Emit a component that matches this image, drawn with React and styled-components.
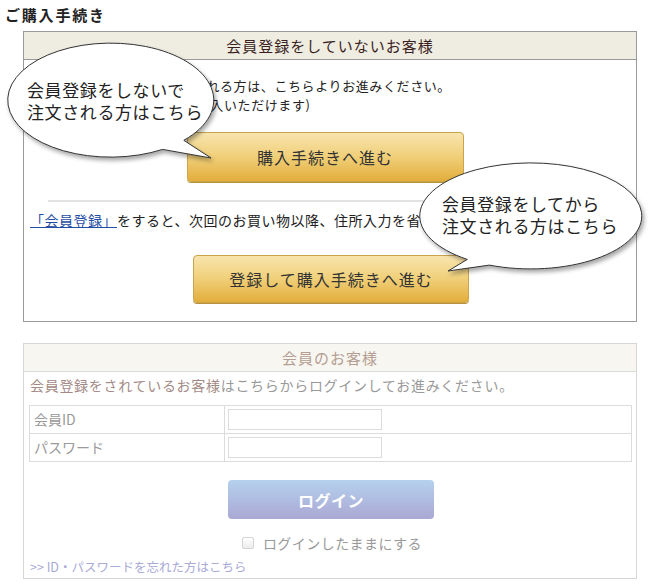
import React from "react";
import styled, { createGlobalStyle } from "styled-components";

const GlobalStyle = createGlobalStyle`
  body {
    margin: 0;
    background: #fff;
    font-family: "Noto Sans CJK JP", "Liberation Sans", sans-serif;
    color: #222;
  }
`;

const App = () => {
  return (
    <Page>
      <GlobalStyle />
      <Title>ご購入手続き</Title>

      <Box $border="#9a9a9a">
        <BoxHeader $bg="#efece1" $color="#3a1e1e" $line="#9a9a9a">
          会員登録をしていないお客様
        </BoxHeader>
        <Intro>
          会員登録をしないでご購入される方は、こちらよりお進みください。
          <br />
          (会員登録をしなくても、ご購入いただけます)
        </Intro>
        <GoldButton $top={18} $w={277} $h={50} $shift={-5}>
          購入手続きへ進む
        </GoldButton>
        <Divider />
        <Note>
          <BlueLink href="#">「会員登録」</BlueLink>をすると、次回のお買い物以降、住所入力を省略できます。
        </Note>
        <GoldButton $top={25} $w={276} $h={48} $shift={1}>
          登録して購入手続きへ進む
        </GoldButton>
      </Box>

      <Box $border="#d6d6d6" $top={21}>
        <BoxHeader $bg="#f8f6f1" $color="#b49e92" $line="#dcdcdc">
          会員のお客様
        </BoxHeader>
        <Lead>
          <strong>会員登録をされているお客様</strong>はこちらからログインしてお進みください。
        </Lead>
        <FieldTable>
          <FieldRow>
            <FieldLabel>会員ID</FieldLabel>
            <FieldCell>
              <TextInput type="text" />
            </FieldCell>
          </FieldRow>
          <FieldRow>
            <FieldLabel>パスワード</FieldLabel>
            <FieldCell>
              <TextInput type="password" />
            </FieldCell>
          </FieldRow>
        </FieldTable>
        <LoginButton>ログイン</LoginButton>
        <KeepLine>
          <Check type="checkbox" />
          <span>ログインしたままにする</span>
        </KeepLine>
        <Forgot href="#">&gt;&gt; ID・パスワードを忘れた方はこちら</Forgot>
      </Box>

      <BubbleLayer width="648" height="330" viewBox="0 0 648 330">
        <defs>
          <filter id="bubbleShadow" x="-10%" y="-10%" width="130%" height="140%">
            <feDropShadow dx="2" dy="3" stdDeviation="2" floodColor="#000" floodOpacity="0.35" />
          </filter>
        </defs>
        <g filter="url(#bubbleShadow)" fill="#fff" stroke="#333" strokeWidth="1">
          <path d="M 183.8 140.3 A 103 57 0 1 0 162.5 149.4 L 211 158 Z" />
          <path d="M 489.4 265.1 A 111 53 0 1 0 467.3 259.4 L 448 271 Z" />
        </g>
      </BubbleLayer>
      <BubbleText $x={27} $y={79}>
        会員登録をしないで
        <br />
        注文される方はこちら
      </BubbleText>
      <BubbleText $x={442} $y={193}>
        会員登録をしてから
        <br />
        注文される方はこちら
      </BubbleText>
    </Page>
  );
};

export default App;

const Page = styled.div`
  position: relative;
  width: 648px;
  padding-top: 6px;
  padding-bottom: 8px;
`;

const Title = styled.h1`
  margin: 0 0 7px 5px;
  font-size: 15px;
  font-weight: bold;
  line-height: 18px;
  letter-spacing: 1.8px;
  color: #222;
`;

const Box = styled.div`
  box-sizing: border-box;
  width: 614px;
  margin: ${(p) => p.$top || 0}px 0 0 23px;
  border: 1px solid ${(p) => p.$border};
  padding-bottom: ${(p) => (p.$top ? 1 : 18)}px;
`;

const BoxHeader = styled.div`
  height: 27px;
  line-height: 27px;
  border-bottom: 1px solid ${(p) => p.$line};
  background: ${(p) => p.$bg};
  color: ${(p) => p.$color};
  text-align: center;
  font-size: 15px;
  letter-spacing: 1px;
`;

const Intro = styled.p`
  margin: 16px 6px 0;
  font-size: 13px;
  line-height: 19px;
  letter-spacing: 0.6px;
  color: #222;
`;

const GoldButton = styled.button`
  display: block;
  box-sizing: border-box;
  width: ${(p) => p.$w}px;
  height: ${(p) => p.$h}px;
  margin: ${(p) => p.$top}px auto 0;
  position: relative;
  left: ${(p) => p.$shift}px;
  border: 1px solid #c9a44c;
  border-radius: 4px;
  background: linear-gradient(#f8e4ae 0%, #f0cf78 50%, #e2ad3c 100%);
  box-shadow: 0 1px 0 #b8913a;
  font-family: inherit;
  font-size: 16px;
  letter-spacing: 1px;
  color: #333;
  cursor: pointer;
`;

const Divider = styled.hr`
  margin: 18px 24px 0;
  height: 2px;
  border: none;
  background: #e2e2e2;
`;

const Note = styled.p`
  margin: 8px 6px 0;
  font-size: 14px;
  line-height: 20px;
  letter-spacing: 0.5px;
  color: #222;
`;

const BlueLink = styled.a`
  color: #1f4ea3;
  text-decoration: underline;
`;

const Lead = styled.p`
  margin: 3px 6px 0;
  font-size: 14px;
  line-height: 20px;
  letter-spacing: 0.7px;
  color: #999;

  strong {
    font-weight: normal;
    color: #a48a86;
  }
`;

const FieldTable = styled.div`
  margin: 10px 4px 0 5px;
  border: 1px solid #dcdcdc;
`;

const FieldRow = styled.div`
  display: grid;
  grid-template-columns: 195px 1fr;
  height: 27px;

  & + & {
    border-top: 1px solid #dcdcdc;
  }
`;

const FieldLabel = styled.div`
  border-right: 1px solid #dcdcdc;
  padding-left: 4px;
  font-size: 14px;
  line-height: 27px;
  color: #9a9a9a;
`;

const FieldCell = styled.div`
  display: flex;
  align-items: center;
  padding-left: 3px;
`;

const TextInput = styled.input`
  box-sizing: border-box;
  width: 154px;
  height: 21px;
  margin: 0;
  border: 1px solid #dcdcdc;
  background: #fff;
`;

const LoginButton = styled.button`
  display: block;
  box-sizing: border-box;
  width: 206px;
  height: 39px;
  margin: 18px auto 0;
  position: relative;
  left: 1px;
  border: none;
  border-radius: 4px;
  background: linear-gradient(#b5d1ee, #aaa8d4);
  font-family: inherit;
  font-size: 16px;
  font-weight: bold;
  letter-spacing: 0.5px;
  color: #fff;
  cursor: pointer;
`;

const KeepLine = styled.label`
  display: flex;
  justify-content: center;
  align-items: center;
  gap: 9px;
  margin-top: 14px;
  padding-left: 4px;
  font-size: 14px;
  line-height: 20px;
  letter-spacing: 0.5px;
  color: #999;
`;

const Check = styled.input`
  appearance: none;
  box-sizing: border-box;
  width: 12px;
  height: 12px;
  margin: 0;
  border: 1px solid #d4d4d4;
  border-radius: 2px;
  background: linear-gradient(#fff, #ececec);
`;

const Forgot = styled.a`
  display: block;
  margin: 4px 0 0 6px;
  font-size: 12.5px;
  line-height: 20px;
  color: #a9aad6;
  text-decoration: none;
`;

const BubbleLayer = styled.svg`
  position: absolute;
  top: 0;
  left: 0;
  pointer-events: none;
`;

const BubbleText = styled.div`
  position: absolute;
  left: ${(p) => p.$x}px;
  top: ${(p) => p.$y}px;
  font-size: 17px;
  line-height: 22px;
  letter-spacing: 0.6px;
  color: #222;
  white-space: nowrap;
`;
